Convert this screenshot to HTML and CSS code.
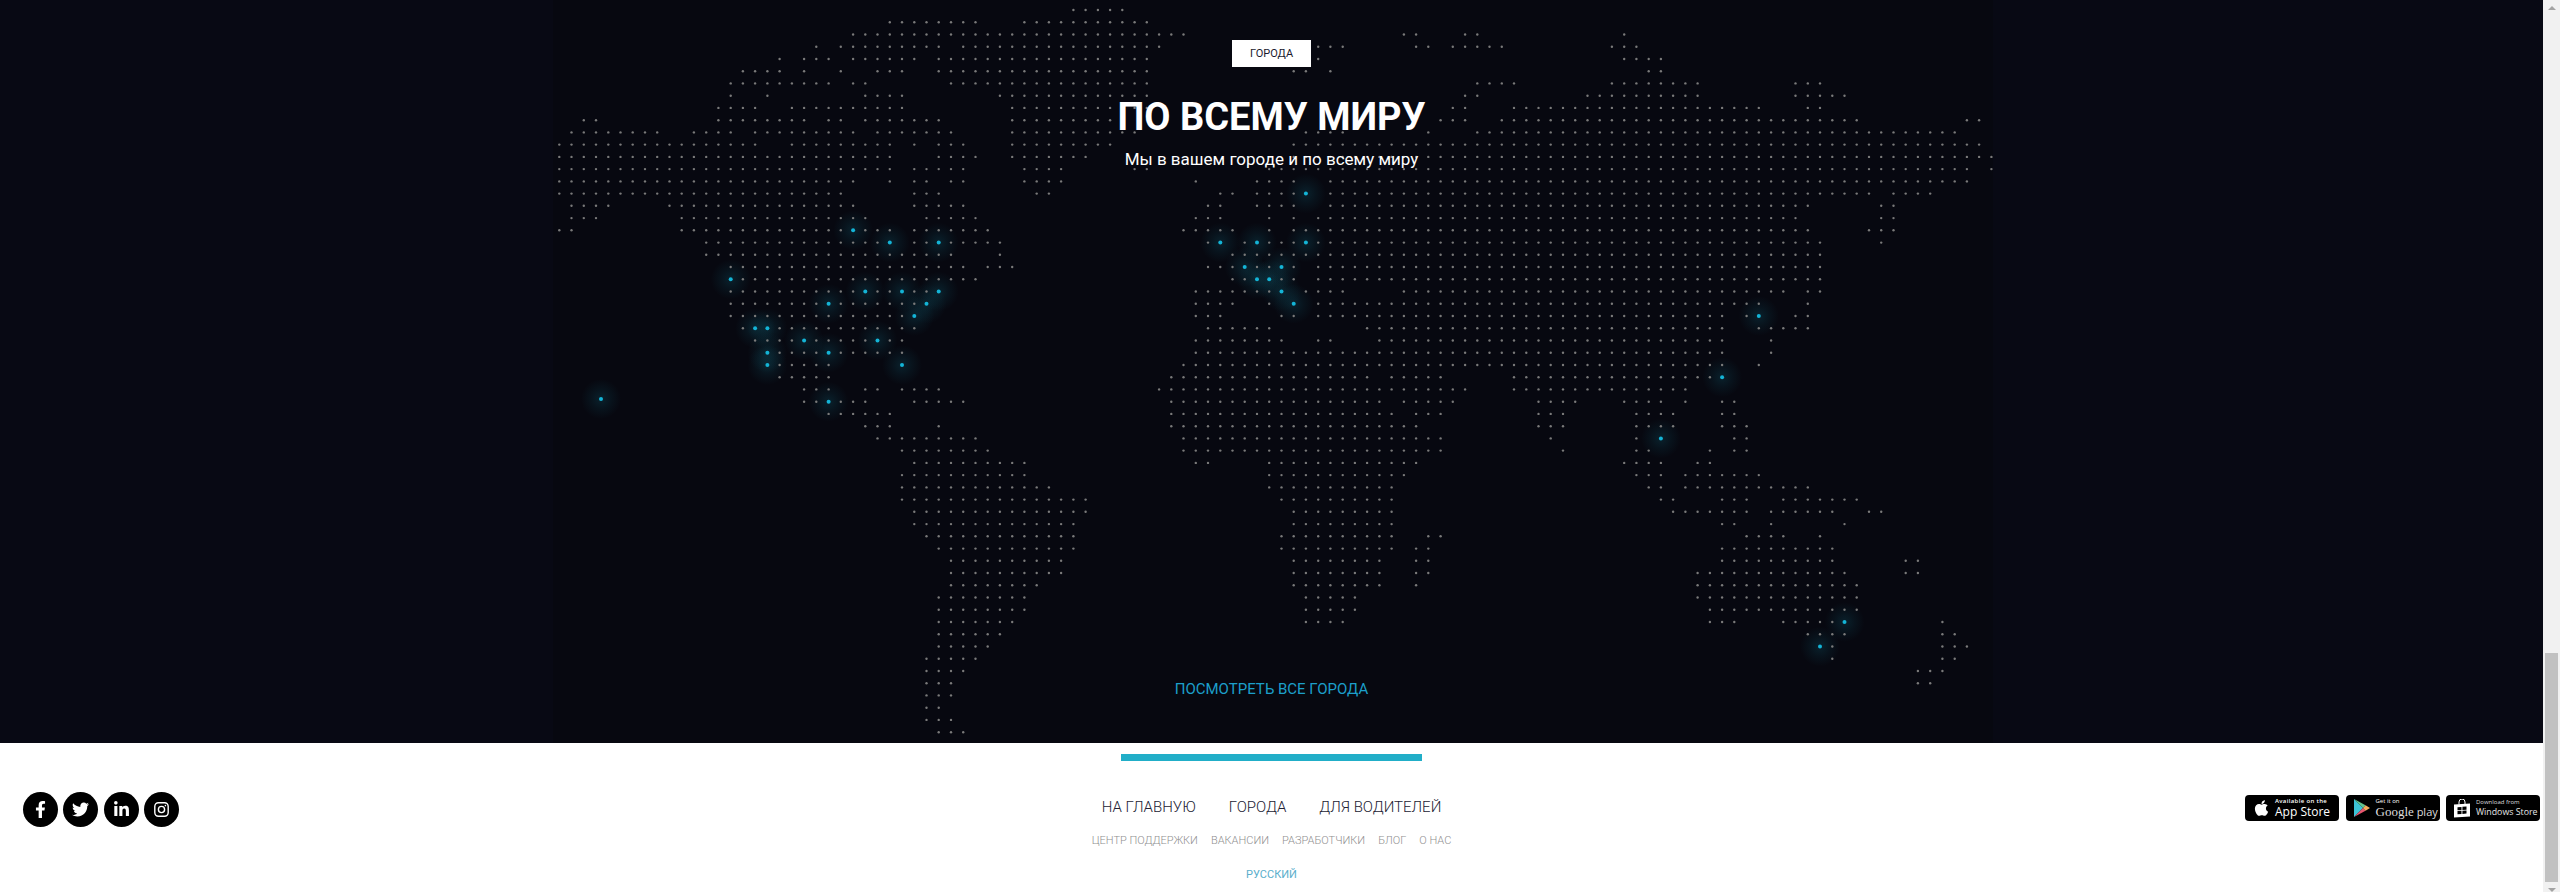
FILE: index.html
```html
<!DOCTYPE html>
<html lang="ru">
<head>
  <meta charset="UTF-8" />
  <meta name="viewport" content="width=device-width, initial-scale=1.0"/>
  <title>Города по всему миру</title>
  <link rel="stylesheet" href="styles.css">
</head>
<body>
  <div class="page">
    <section class="cities">
      <svg class="dot-map" id="dotMap" width="1440" height="743" viewBox="0 0 1440 743" aria-hidden="true">
        <defs>
          <radialGradient id="glow">
            <stop offset="0" stop-color="#17a5c0" stop-opacity="0.16"/>
            <stop offset="0.5" stop-color="#17a5c0" stop-opacity="0.07"/>
            <stop offset="1" stop-color="#17a5c0" stop-opacity="0"/>
          </radialGradient>
        </defs>
      </svg>
      <span class="tag">ГОРОДА</span>
      <h1>ПО ВСЕМУ МИРУ</h1>
      <p class="lead">Мы в вашем городе и по всему миру</p>
      <a class="all-cities" href="#">ПОСМОТРЕТЬ ВСЕ ГОРОДА</a>
    </section>

    <footer class="footer">
      <div class="social">
        <a href="#" class="social-link" aria-label="Facebook">
          <svg width="11" height="17" viewBox="0 0 320 512"><path fill="#fff" d="M279.14 288l14.22-92.66h-88.91v-60.13c0-25.35 12.42-50.06 52.24-50.06h40.42V6.26S260.43 0 225.36 0c-73.22 0-121.08 44.38-121.08 124.72v70.62H22.89V288h81.39v224h100.17V288z"/></svg>
        </a>
        <a href="#" class="social-link" aria-label="Twitter">
          <svg width="17" height="17" viewBox="0 0 512 512"><path fill="#fff" d="M459.37 151.716c.325 4.548.325 9.097.325 13.645 0 138.72-105.583 298.558-298.558 298.558-59.452 0-114.68-17.219-161.137-47.106 8.447.974 16.568 1.299 25.34 1.299 49.055 0 94.213-16.568 130.274-44.832-46.132-.975-84.792-31.188-98.112-72.772 6.498.974 12.995 1.624 19.818 1.624 9.421 0 18.843-1.3 27.614-3.573-48.081-9.747-84.143-51.98-84.143-102.985v-1.299c13.969 7.797 30.214 12.67 47.431 13.319-28.264-18.843-46.781-51.005-46.781-87.391 0-19.492 5.197-37.36 14.294-52.954 51.655 63.675 129.3 105.258 216.365 109.807-1.624-7.797-2.599-15.918-2.599-24.04 0-57.828 46.782-104.934 104.934-104.934 30.213 0 57.502 12.67 76.67 33.137 23.715-4.548 46.456-13.32 66.599-25.34-7.798 24.366-24.366 44.833-46.132 57.827 21.117-2.273 41.584-8.122 60.426-16.243-14.292 20.791-32.161 39.308-52.628 54.253z"/></svg>
        </a>
        <a href="#" class="social-link" aria-label="LinkedIn">
          <svg width="15" height="17" viewBox="0 0 448 512"><path fill="#fff" d="M100.28 448H7.4V148.9h92.88zM53.79 108.1C24.09 108.1 0 83.5 0 53.8a53.79 53.79 0 0 1 107.58 0c0 29.7-24.1 54.3-53.79 54.3zM447.9 448h-92.68V302.4c0-34.7-.7-79.2-48.29-79.2-48.29 0-55.69 37.7-55.69 76.7V448h-92.78V148.9h89.08v40.8h1.3c12.4-23.5 42.69-48.3 87.88-48.3 94 0 111.28 61.9 111.28 142.3V448z"/></svg>
        </a>
        <a href="#" class="social-link" aria-label="Instagram">
          <svg width="15" height="15" viewBox="0 0 15 15" fill="none" stroke="#fff"><rect x="0.8" y="0.8" width="13.4" height="13.4" rx="3.6" stroke-width="1.4"/><circle cx="7.5" cy="7.5" r="3.1" stroke-width="1.4"/><circle cx="11.4" cy="3.6" r="0.8" fill="#fff" stroke="none"/></svg>
        </a>
      </div>

      <div class="footer-center">
        <div class="footer-bar"></div>
        <nav class="nav-main">
          <a href="#">НА ГЛАВНУЮ</a>
          <a href="#">ГОРОДА</a>
          <a href="#">ДЛЯ ВОДИТЕЛЕЙ</a>
        </nav>
        <nav class="nav-sub">
          <a href="#">ЦЕНТР ПОДДЕРЖКИ</a>
          <a href="#">ВАКАНСИИ</a>
          <a href="#">РАЗРАБОТЧИКИ</a>
          <a href="#">БЛОГ</a>
          <a href="#">О НАС</a>
        </nav>
        <a href="#" class="lang">РУССКИЙ</a>
      </div>

      <div class="stores">
        <a href="#" class="store store-apple">
          <svg class="store-icon" width="15" height="18" viewBox="0 0 384 512"><path fill="#fff" d="M318.7 268.7c-.2-36.7 16.4-64.4 50-84.8-18.8-26.9-47.2-41.7-84.7-44.6-35.5-2.8-74.3 20.7-88.5 20.7-15 0-49.4-19.7-76.4-19.7C63.3 141.2 4 184.8 4 273.5q0 39.3 14.4 81.2c12.8 36.7 59 126.7 107.2 125.2 25.2-.6 43-17.9 75.8-17.9 31.8 0 48.3 17.9 76.4 17.9 48.6-.7 90.4-82.5 102.6-119.3-65.2-30.7-61.7-90-61.7-91.9zm-56.6-164.2c27.3-32.4 24.8-61.9 24-72.5-24.1 1.4-52 16.4-67.9 34.9-17.5 19.8-27.8 44.3-25.6 71.9 26.1 2 49.9-11.4 69.5-34.3z"/></svg>
          <span class="store-text">
            <span class="store-small store-small-apple">Available on the</span>
            <span class="store-big">App Store</span>
          </span>
        </a>
        <a href="#" class="store">
          <svg class="store-icon" width="16" height="18" viewBox="0 0 16 18">
            <polygon points="0,0 0,18 9,9" fill="#3cc3d6"/>
            <polygon points="0,0 9,9 11.5,6.3" fill="#62c48e"/>
            <polygon points="0,18 9,9 11.5,11.7" fill="#e8566f"/>
            <polygon points="11.5,6.3 16,9 11.5,11.7 9,9" fill="#f3ab5b"/>
          </svg>
          <span class="store-text">
            <span class="store-small">Get it on</span>
            <span class="store-big store-big-google"><span class="google-word">Google</span> play</span>
          </span>
        </a>
        <a href="#" class="store">
          <svg class="store-icon" width="16" height="19" viewBox="0 0 16 19">
            <path d="M5 5.5V3a3 3 0 0 1 6 0v2" fill="none" stroke="#fff" stroke-width="1"/>
            <polygon points="0,5.5 16,4.5 16,17.5 0,18.5" fill="#fff"/>
            <polygon points="3.5,8.3 7.5,7.9 7.5,11 3.5,11.2" fill="#000"/>
            <polygon points="8.4,7.8 12.5,7.4 12.5,10.8 8.4,11" fill="#000"/>
            <polygon points="3.5,12 7.5,11.8 7.5,15 3.5,15.3" fill="#000"/>
            <polygon points="8.4,11.8 12.5,11.6 12.5,14.6 8.4,14.9" fill="#000"/>
          </svg>
          <span class="store-text">
            <span class="store-small store-small-win">Download from</span>
            <span class="store-big store-big-win">Windows Store</span>
          </span>
        </a>
      </div>
    </footer>
  </div>

  <div class="scrollbar" aria-hidden="true">
    <span class="scroll-up"></span>
    <span class="scroll-thumb"></span>
    <span class="scroll-down"></span>
  </div>

  <script src="map.js"></script>
</body>
</html>
```

FILE: styles.css
```css
html, body {
  height: 100%;
  margin: 0;
  overflow: hidden;
}
body {
  display: flex;
  font-family: Roboto, Arial, sans-serif;
  background-color: #ffffff;
}
a {
  text-decoration: none;
  color: inherit;
}
.page {
  flex: 1;
  min-width: 0;
}

/* cities block */
.cities {
  position: relative;
  height: 743px;
  box-sizing: border-box;
  padding: 40px 0 44px;
  display: flex;
  flex-direction: column;
  align-items: center;
  background-color: #080914;
  overflow: hidden;
}
.dot-map {
  position: absolute;
  left: 553px;
  top: 0;
  background-color: #070810;
}
.tag {
  position: relative;
  width: 79px;
  height: 27px;
  line-height: 27px;
  text-align: center;
  font-size: 11px;
  color: #1a1a2e;
  background-color: #ffffff;
}
h1 {
  position: relative;
  margin: 27px 0 0;
  font-size: 38px;
  line-height: 46px;
  font-weight: 700;
  color: #ffffff;
}
.lead {
  position: relative;
  margin: 8px 0 0;
  font-size: 17px;
  line-height: 22px;
  color: #ffffff;
}
.all-cities {
  position: relative;
  margin-top: auto;
  font-size: 15px;
  line-height: 20px;
  color: #1c9fca;
}

/* footer */
.footer {
  display: grid;
  grid-template-columns: 1fr auto 1fr;
  height: 149px;
}
.social {
  display: flex;
  gap: 5.33px;
  padding: 49px 0 0 23px;
}
.social-link {
  width: 35px;
  height: 35px;
  border-radius: 50%;
  background-color: #000000;
  display: flex;
  align-items: center;
  justify-content: center;
}
.footer-center {
  display: flex;
  flex-direction: column;
  align-items: center;
  padding-top: 11px;
}
.footer-bar {
  width: 301px;
  height: 7px;
  background-color: #21aec8;
}
.nav-main {
  display: flex;
  gap: 33px;
  margin-top: 36px;
  font-size: 15px;
  line-height: 20px;
  font-weight: 300;
  color: #222233;
}
.nav-sub {
  display: flex;
  gap: 13px;
  margin-top: 16px;
  font-size: 11px;
  line-height: 16px;
  font-weight: 300;
  color: #8f8f8f;
}
.lang {
  margin-top: 18px;
  font-size: 11px;
  line-height: 16px;
  color: #5aaecb;
}
.stores {
  display: flex;
  justify-content: flex-end;
  gap: 6.5px;
  padding: 52px 3px 0 0;
}
.store {
  width: 94px;
  height: 26px;
  box-sizing: border-box;
  padding-left: 8px;
  display: flex;
  align-items: center;
  gap: 6px;
  border-radius: 4px;
  background-color: #000000;
  color: #ffffff;
  font-family: "Open Sans", sans-serif;
}
.store-apple {
  padding-left: 9px;
}
.store-text {
  display: flex;
  flex-direction: column;
  white-space: nowrap;
}
.store-small {
  font-size: 6px;
  line-height: 7px;
}
.store-small-apple {
  font-weight: 600;
  letter-spacing: 0.35px;
}
.store-small-win {
  color: #dddddd;
}
.store-big {
  font-size: 12px;
  line-height: 14px;
}
.store-big-google {
  font-size: 11px;
  color: #dddddd;
}
.google-word {
  font-family: "Liberation Serif", serif;
  font-size: 13px;
}
.store-big-win {
  font-size: 8.8px;
  line-height: 12px;
  color: #e6e6e6;
}

/* page scrollbar */
.scrollbar {
  width: 17px;
  flex-shrink: 0;
  display: flex;
  flex-direction: column;
  align-items: center;
  background-color: #f1f1f1;
}
.scroll-up {
  margin-top: 6px;
  border-left: 4px solid transparent;
  border-right: 4px solid transparent;
  border-bottom: 4px solid #a3a3a3;
}
.scroll-thumb {
  margin-top: auto;
  width: 13px;
  height: 229px;
  background-color: #c1c1c1;
}
.scroll-down {
  margin-top: 6px;
  border-left: 4px solid transparent;
  border-right: 4px solid transparent;
  border-top: 4px solid #a3a3a3;
}
```

FILE: map.js
```js
// dot map: each row is a list of column runs, rows and columns sit on a 12.24px grid
const rows = [
  "42-46",
  "27-34 38-48",
  "24-51 69-70 74-75 87",
  "21 23-31 33-49 62-64 70-71 73-77 86-88",
  "18 20-22 24-29 31-48 62 87-90",
  "15-18 20 23 26-28 31-48 60-61 63 89-90",
  "14-22 24-25 32-48 75-78 86-93 101-103",
  "14 17 25-28 36-48 74-75 84-93 101-105",
  "13-16 19-28 37-48 73-74 78-98 102-103",
  "2-3 13-20 22-23 25-31 37-46 72-74 77-106 115-116",
  "1-8 11-14 16-24 26-32 37-47 61-64 71 75-114",
  "0-16 19-27 29 31-33 37-45 60-116",
  "0-27 31-34 37-43 60-117",
  "0-27 29-33 38-41 47-48 58-115 117",
  "0-24 27 29-30 32-33 38-41 52 57-60 63-115",
  "0-23 29-31 39-40 54-55 57-61 63-107 109-112",
  "1-4 9-24 29-33 53-54 57-60 63-102 108-109",
  "1-3 10-25 30-34 52-54 58 60 62-101 108-109",
  "0-1 10-27 29-35 51-55 58 60-102 107-109",
  "12-27 29-36 53-54 56-103 108",
  "12-32 36 55-103",
  "14-33 35-37 53-60 62-103",
  "14-34 55-60 62-103",
  "14-31 52-59 61-64 69-100 102-103",
  "14-30 52-55 58 60 62-98 102",
  "14-29 52-54 59-60 62-95 97-98 101-102",
  "15-29 53-58 66-95 98-102",
  "16-28 52-59 62-63 67-95 99",
  "17-28 52-95 99",
  "17-22 28 51-95 98",
  "18-22 50-66 68-72 78-95",
  "20-22 25-26 28-31 49-74 78-92",
  "20-25 29-33 50-67 69-73 80-83 87-90 92 95-96",
  "22-27 50-68 70-72 80-82 88-91 95-96",
  "25-27 31 50-70 80-82 88-91 95-97",
  "26-34 51-72 81 88 90 96-97",
  "28-35 51-72 82 88-89 94 96-97",
  "29-38 52-53 58-70 87-90 93-94",
  "28-38 58-69 88-90 92-98",
  "28-40 58-68 89-90 92-102",
  "28-43 59-68 90-91 95-97 100-106",
  "29-43 60-68 91-97 99-104 107-108",
  "29-42 60-68 95-96 99 105",
  "30-42 59-68 71-72 97-100 103",
  "31-42 59-68 70-71 95-104",
  "32-41 60-67 70-71 95-104 110-111",
  "32-41 60-67 70-71 93-105 110-111",
  "32-39 60-67 70 93-106",
  "31-38 61-65 93-106",
  "31-38 61-65 94-106",
  "31-37 61-64 94-96 100-105 113",
  "31-36 102-105 113-114",
  "31-35 103-104 113-115",
  "30-34 104 113-114",
  "30-33 111-113",
  "30-32 111-112",
  "30-32",
  "30-31",
  "30-32",
  "31-33"
];

// cities, as [row, column]
const cities = [
  [15, 61], [18, 24], [19, 27], [19, 31], [19, 54], [19, 57], [19, 61],
  [21, 56], [21, 59], [22, 14], [22, 57], [22, 58], [23, 25], [23, 28],
  [23, 31], [23, 59], [24, 22], [24, 30], [24, 60], [25, 29], [25, 98],
  [26, 16], [26, 17], [27, 20], [27, 26], [28, 17], [28, 22], [29, 17],
  [29, 28], [30, 95], [32, 22], [35, 90], [50, 105], [52, 103]
];

const map = document.getElementById("dotMap");
const NS = "http://www.w3.org/2000/svg";
const STEP = 12.24;
const colX = col => 6.3 + STEP * col;
const rowY = row => 10 + STEP * row;

function circle(x, y, r, fill) {
  const c = document.createElementNS(NS, "circle");
  c.setAttribute("cx", x.toFixed(1));
  c.setAttribute("cy", y.toFixed(1));
  c.setAttribute("r", r);
  c.setAttribute("fill", fill);
  map.appendChild(c);
}

function city(x, y) {
  circle(x, y, 2, "#14b4d6");
}

// glows go first so the plain dots stay on top
cities.forEach(([row, col]) => circle(colX(col), rowY(row), 20, "url(#glow)"));
circle(48, 399, 20, "url(#glow)");

const isCity = (row, col) => cities.some(c => c[0] === row && c[1] === col);

rows.forEach((runs, row) => {
  runs.split(" ").forEach(run => {
    const [from, to = from] = run.split("-").map(Number);
    for (let col = from; col <= to; col++) {
      if (isCity(row, col)) {
        city(colX(col), rowY(row));
      } else {
        circle(colX(col), rowY(row), 1.2, "#7a7a7a");
      }
    }
  });
});

// lone dot out in the ocean, off the grid
city(48, 399);
```
